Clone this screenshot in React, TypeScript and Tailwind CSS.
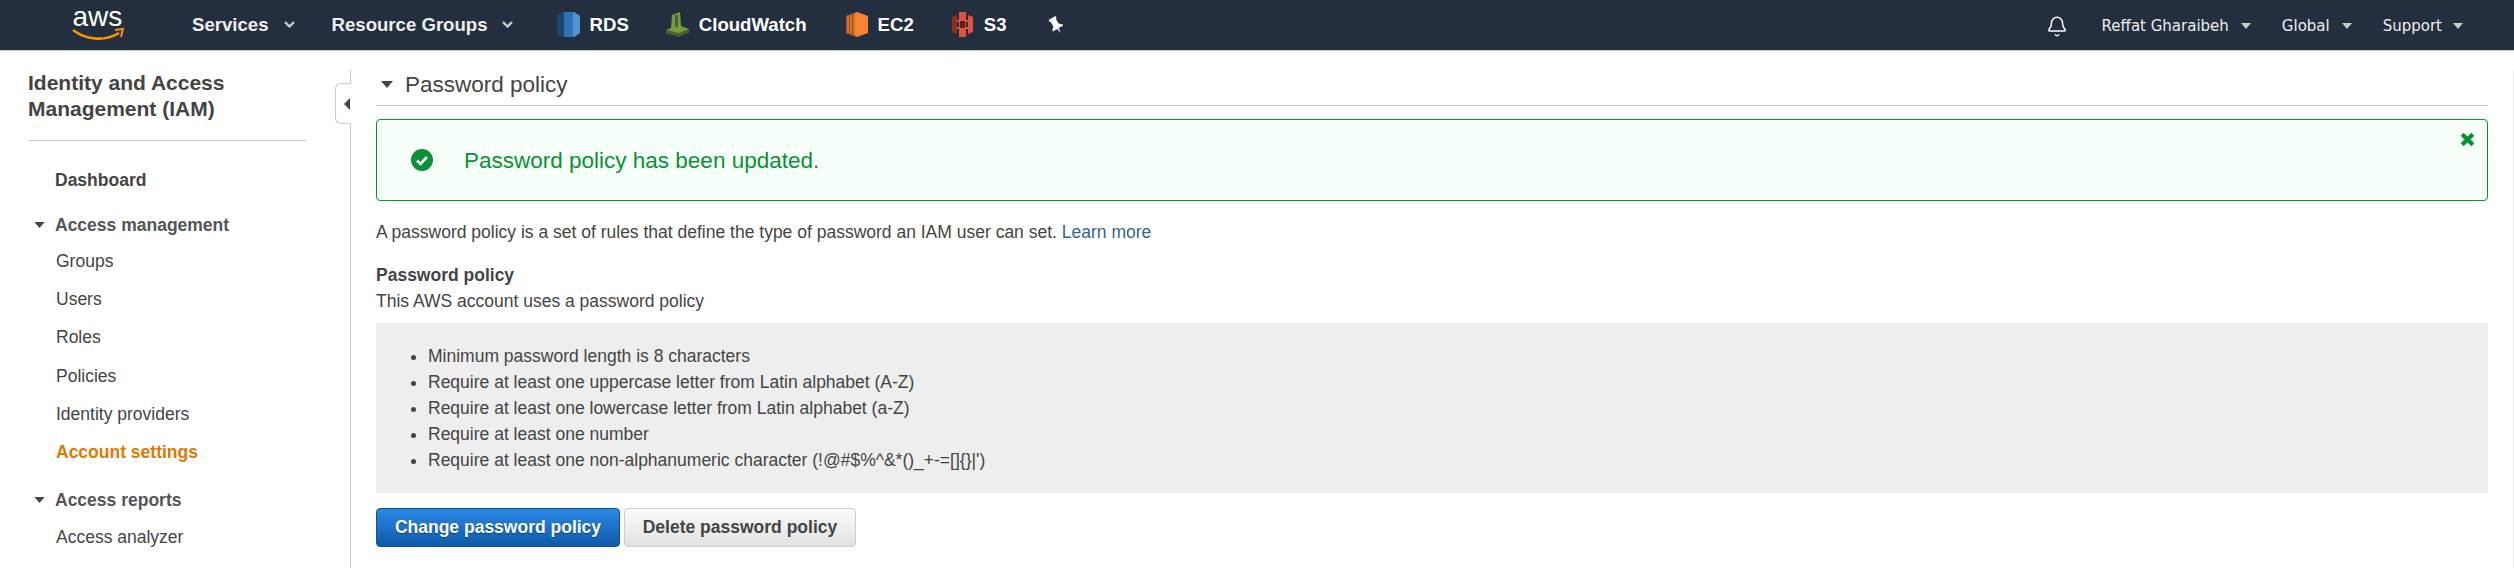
import React from 'react';
import { Bell } from 'lucide-react';

const Caret = ({ className }: { className: string }) => (
  <svg viewBox="0 0 12 7" className={className} fill="currentColor">
    <path d="M0 0h12L6 7z" />
  </svg>
);

const Chevron = () => (
  <svg viewBox="0 0 11 7" className="w-[11px] h-[7px] text-[#c8ccd0]" fill="none" stroke="currentColor" strokeWidth="2.4">
    <path d="M1 1l4.5 4.5L10 1" />
  </svg>
);

const AwsLogo = () => (
  <svg viewBox="0 0 52 44" className="w-[52px] h-[44px]">
    <text x="0.5" y="26" fontFamily="'Liberation Sans', sans-serif" fontSize="28" fill="#fff">aws</text>
    <path d="M1 30c14 11 33 11 46 3" fill="none" stroke="#f79400" strokeWidth="2.6" />
    <path d="M43 30l8-1-2 8" fill="none" stroke="#f79400" strokeWidth="2" />
  </svg>
);

const RdsIcon = () => (
  <svg viewBox="0 0 23 25" className="w-[23px] h-[25px]">
    <path d="M6 0h11l6 4v17l-6 4H6l-6-4V4z" fill="#2e73b8" />
    <path d="M0 4l6-4h1v25H6l-6-4z" fill="#1a476f" />
    <path d="M16 0h1l6 4v17l-6 4h-1z" fill="#5294cf" />
  </svg>
);

const CloudWatchIcon = () => (
  <svg viewBox="0 0 23 25" className="w-[23px] h-[25px]">
    <path d="M6 3l8-3 1 14 8 3v3l-10 4-13-3v-3l5-2z" fill="#759c3e" />
    <path d="M9 3h3v12H9z" fill="#4b612c" />
    <path d="M0 18l13 3 10-4v3l-10 5-13-4z" fill="#4b612c" />
  </svg>
);

const Ec2Icon = () => (
  <svg viewBox="0 0 22 25" className="w-[22px] h-[25px]">
    <path d="M11 0l11 4v17l-11 4-11-4V4z" fill="#f58534" />
    <path d="M0 4l9-3v23l-9-3z" fill="#9d5025" />
    <path d="M2 4v17M5 3v19M8 2v21" stroke="#f58534" strokeWidth="1.2" />
  </svg>
);

const S3Icon = () => (
  <svg viewBox="0 0 21 25" className="w-[21px] h-[25px]">
    <path d="M7 0h7v25H7z" fill="#e05243" />
    <path d="M0 5l5-2v19l-5-2z" fill="#8c3123" />
    <path d="M16 3l5 2v15l-5 2z" fill="#e05243" />
    <path d="M5 8h11v2H5zM5 15h11v2H5z" fill="#e05243" />
    <path d="M8 9h5v7H8z" fill="#5e1f18" />
  </svg>
);

const PinIcon = () => (
  <svg viewBox="0 0 16 18" className="w-[16px] h-[18px]" fill="#fff">
    <g transform="rotate(-30 8 9)">
      <path d="M4 1h8v2l-1 1v5l3 3v1H2v-1l3-3V4L4 3z" />
      <path d="M7 13h2l-1 5z" />
    </g>
  </svg>
);

const sidebarLinks = ['Groups', 'Users', 'Roles', 'Policies', 'Identity providers'];

const rules = [
  'Minimum password length is 8 characters',
  'Require at least one uppercase letter from Latin alphabet (A-Z)',
  'Require at least one lowercase letter from Latin alphabet (a-Z)',
  'Require at least one number',
  "Require at least one non-alphanumeric character (!@#$%^&*()_+-=[]{}|')",
];

const App: React.FC = () => {
  return (
    <div className="h-[568px] overflow-hidden bg-white font-['Liberation_Sans',Arial,sans-serif] text-[#444]">
      {/* Top nav */}
      <header className="h-[51px] bg-[#232f3e] border-b border-[#ccc] flex items-center">
        <div className="ml-[72px] self-start"><AwsLogo /></div>
        <nav className="flex items-center ml-[68px] text-[18.6px] font-bold text-[#eee]">
          <span>Services</span>
          <span className="ml-[15px]"><Chevron /></span>
          <span className="ml-[37px]">Resource Groups</span>
          <span className="ml-[14px]"><Chevron /></span>
          <span className="ml-[44px] flex items-center gap-[10px] text-white"><RdsIcon />RDS</span>
          <span className="ml-[37px] flex items-center gap-[10px] text-white"><CloudWatchIcon />CloudWatch</span>
          <span className="ml-[39px] flex items-center gap-[10px] text-white"><Ec2Icon />EC2</span>
          <span className="ml-[38px] flex items-center gap-[11px] text-white"><S3Icon />S3</span>
          <span className="ml-[41px]"><PinIcon /></span>
        </nav>
        <div className="ml-auto mt-[2px] flex items-center font-['DejaVu_Sans',sans-serif] text-[15px] text-[#eee] mr-[51px]">
          <Bell className="w-[22px] h-[23px] text-white" strokeWidth={1.6} />
          <span className="ml-[34px]">Reffat Gharaibeh</span>
          <Caret className="ml-[12px] w-[10px] h-[6px] text-[#ccc]" />
          <span className="ml-[31px]">Global</span>
          <Caret className="ml-[12px] w-[10px] h-[6px] text-[#ccc]" />
          <span className="ml-[31px]">Support</span>
          <Caret className="ml-[11px] w-[10px] h-[6px] text-[#ccc]" />
        </div>
      </header>

      <div className="flex">
        {/* Sidebar */}
        <aside className="relative w-[351px] shrink-0 h-[517px] mt-[19px] border-r border-[#ccc]">
          <div className="ml-[28px] w-[278px] pb-[18px] border-b border-[#ccc]">
            <h2 className="text-[21px] leading-[26px] font-bold">Identity and Access<br />Management (IAM)</h2>
          </div>
          <div className="mt-[26px] ml-[55px] text-[17.5px] leading-[26px] font-bold">Dashboard</div>
          <div className="mt-[19px] ml-[34px] flex items-center text-[17.5px] leading-[26px] font-bold text-[#555]">
            <Caret className="w-[11px] h-[6px] mr-[10px] text-[#444]" />Access management
          </div>
          <ul className="ml-[56px] mt-[4px] text-[17.5px]">
            {sidebarLinks.map((link) => (
              <li key={link} className="h-[38.2px] flex items-center">{link}</li>
            ))}
            <li className="h-[38.2px] flex items-center font-bold text-[#dd7a00]">Account settings</li>
          </ul>
          <div className="mt-[16px] ml-[34px] flex items-center text-[17.5px] leading-[26px] font-bold text-[#555]">
            <Caret className="w-[11px] h-[6px] mr-[10px] text-[#444]" />Access reports
          </div>
          <ul className="ml-[56px] mt-[5px] text-[17.5px]">
            <li className="h-[38.2px] flex items-center">Access analyzer</li>
            <li className="h-[38.2px] flex items-center ml-[27px]">Archive rules</li>
          </ul>
          {/* Collapse tab */}
          <div className="absolute right-[-1px] top-[13px] w-[16px] h-[41px] bg-white border border-r-0 border-[#ccc] rounded-l-[6px] flex items-center justify-end pr-[1px]">
            <svg viewBox="0 0 6 12" className="w-[6px] h-[12px] text-[#444]" fill="currentColor"><path d="M6 0v12L0 6z" /></svg>
          </div>
        </aside>

        {/* Main */}
        <main className="ml-[25px] w-[2112px] shrink-0 mt-[19px]">
          <div className="h-[36px] border-b border-[#ccc] flex items-center pb-[6px]">
            <Caret className="ml-[5px] w-[12px] h-[7px] text-[#444]" />
            <h1 className="ml-[12px] text-[22.5px] font-normal">Password policy</h1>
          </div>
          <div className="relative mt-[13px] h-[82px] border border-[#0b9135] rounded-[4px] bg-[#f6fff8] flex items-center">
            <svg viewBox="0 0 22 22" className="ml-[34px] w-[22px] h-[22px]">
              <circle cx="11" cy="11" r="11" fill="#0b9135" />
              <path d="M6 11.5l3.5 3.5L16 8" fill="none" stroke="#fff" strokeWidth="2.6" />
            </svg>
            <span className="ml-[31px] pt-[1px] text-[22.5px] text-[#0b9135]">Password policy has been updated.</span>
            <svg viewBox="0 0 14 14" className="absolute right-[12px] top-[12px] w-[15px] h-[15px] text-[#0b9135]" fill="none" stroke="currentColor" strokeWidth="4">
              <path d="M2 2l10 10M12 2L2 12" />
            </svg>
          </div>
          <p className="mt-[18px] text-[17.5px] leading-[26px]">
            A password policy is a set of rules that define the type of password an IAM user can set.{' '}
            <span className="text-[#33658f]">Learn more</span>
          </p>
          <h3 className="mt-[17px] text-[17.5px] leading-[26px] font-bold">Password policy</h3>
          <p className="text-[17.5px] leading-[26px]">This AWS account uses a password policy</p>
          <div className="mt-[9px] h-[170px] bg-[#eee] pt-[20px] pl-[52px]">
            <ul className="list-disc text-[17.5px] leading-[26px]">
              {rules.map((rule) => (
                <li key={rule}>{rule}</li>
              ))}
            </ul>
          </div>
          <div className="mt-[15px] flex gap-[4px]">
            <button className="h-[39px] w-[244px] rounded-[4px] border border-[#15508f] bg-gradient-to-b from-[#2b88e6] to-[#0e5aa8] text-white text-[17.5px] font-bold [text-shadow:0_1px_1px_rgba(0,0,0,0.4)]">Change password policy</button>
            <button className="h-[39px] w-[232px] rounded-[4px] border border-[#ccc] bg-gradient-to-b from-[#fafafa] to-[#e2e2e2] text-[#444] text-[17.5px] font-bold">Delete password policy</button>
          </div>
        </main>

        {/* Scrollbar edge */}
        <div className="ml-auto mt-[19px] w-px h-[498px] bg-[#eee]" />
      </div>
    </div>
  );
};

export default App;
